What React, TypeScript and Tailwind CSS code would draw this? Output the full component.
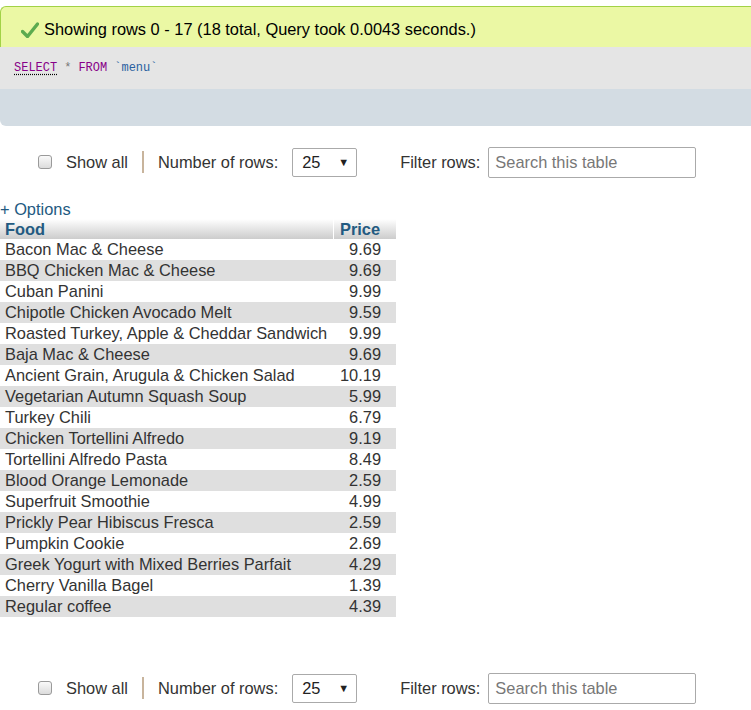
const rows: [string, string][] = [
  ['Bacon Mac & Cheese', '9.69'],
  ['BBQ Chicken Mac & Cheese', '9.69'],
  ['Cuban Panini', '9.99'],
  ['Chipotle Chicken Avocado Melt', '9.59'],
  ['Roasted Turkey, Apple & Cheddar Sandwich', '9.99'],
  ['Baja Mac & Cheese', '9.69'],
  ['Ancient Grain, Arugula & Chicken Salad', '10.19'],
  ['Vegetarian Autumn Squash Soup', '5.99'],
  ['Turkey Chili', '6.79'],
  ['Chicken Tortellini Alfredo', '9.19'],
  ['Tortellini Alfredo Pasta', '8.49'],
  ['Blood Orange Lemonade', '2.59'],
  ['Superfruit Smoothie', '4.99'],
  ['Prickly Pear Hibiscus Fresca', '2.59'],
  ['Pumpkin Cookie', '2.69'],
  ['Greek Yogurt with Mixed Berries Parfait', '4.29'],
  ['Cherry Vanilla Bagel', '1.39'],
  ['Regular coffee', '4.39'],
]

function Check() {
  return (
    <svg width="18" height="16" viewBox="0 0 18 16" className="shrink-0">
      <path d="M1.5 9.5 L6.5 14.5 L16.5 2" fill="none" stroke="#5cab4f" strokeWidth="3.4" strokeLinecap="round" strokeLinejoin="round" />
    </svg>
  )
}

function NavBar() {
  return (
    <div className="flex items-center h-[30px] pl-[38px] text-[16.4px] text-[#333]">
      <span className="w-[14px] h-[14px] rounded-[3px] border border-[#9a9a9a] bg-gradient-to-b from-[#fafafa] to-[#dcdcdc]" />
      <span className="ml-[14px]">Show all</span>
      <span className="ml-[14px] w-[2px] h-[22px] bg-[#c8b49c]" />
      <span className="ml-[14px]">Number of rows:</span>
      <div className="ml-[14px] w-[65px] h-[29px] border border-[#aaa] rounded-[2px] flex items-center justify-between pl-[9px] pr-[7px] bg-white">
        <span className="text-[#222]">25</span>
        <span className="text-[11px] text-[#222]">▼</span>
      </div>
      <span className="ml-[43px]">Filter rows:</span>
      <div className="ml-[8px] w-[208px] h-[31px] border border-[#aaa] rounded-[2px] flex items-center pl-[6px] text-[#777] bg-white">
        Search this table
      </div>
    </div>
  )
}

export default function App() {
  return (
    <div className="min-h-screen bg-white font-['Liberation_Sans',Arial,sans-serif] text-[16.4px] text-[#333] pt-[6px]">
      <div className="h-[41px] border-t border-l border-[#a2d246] rounded-tl-[6px] bg-[#ebf8a4] flex items-center gap-[5px] pl-[20px] pt-[5px] text-black">
        <Check />
        <span>Showing rows 0 - 17 (18 total, Query took 0.0043 seconds.)</span>
      </div>
      <div className="h-[42px] bg-[#e5e5e5] flex items-center pl-[14px] font-['Liberation_Mono',monospace] text-[12px]">
        <span className="text-[#880088] underline decoration-dotted decoration-black underline-offset-[3px]">SELECT</span>
        <span className="text-[#777] ml-[7px]">*</span>
        <span className="text-[#880088] ml-[7px]">FROM</span>
        <span className="text-[#2a5fa0] ml-[7px]">`menu`</span>
      </div>
      <div className="h-[37px] bg-[#d3dce3] rounded-bl-[6px]" />

      <div className="mt-[21px]">
        <NavBar />
      </div>

      <div className="mt-[22px] text-[#235a81] leading-[20px]">+ Options</div>
      <div className="w-[396px]">
        <div className="flex h-[20px] bg-gradient-to-b from-white to-[#cccccc] font-bold text-[#235a81] leading-[20px]">
          <div className="w-[334px] pl-[5px] border-r border-white">Food</div>
          <div className="flex-1 pl-[6px]">Price</div>
        </div>
        {rows.map(([food, price], i) => (
          <div key={food} className={`flex h-[21px] leading-[21px] ${i % 2 === 1 ? 'bg-[#dfdfdf]' : 'bg-white'}`}>
            <div className="w-[334px] pl-[5px] whitespace-nowrap">{food}</div>
            <div className="flex-1 text-right pr-[15px]">{price}</div>
          </div>
        ))}
      </div>

      <div className="mt-[56px]">
        <NavBar />
      </div>
    </div>
  )
}
